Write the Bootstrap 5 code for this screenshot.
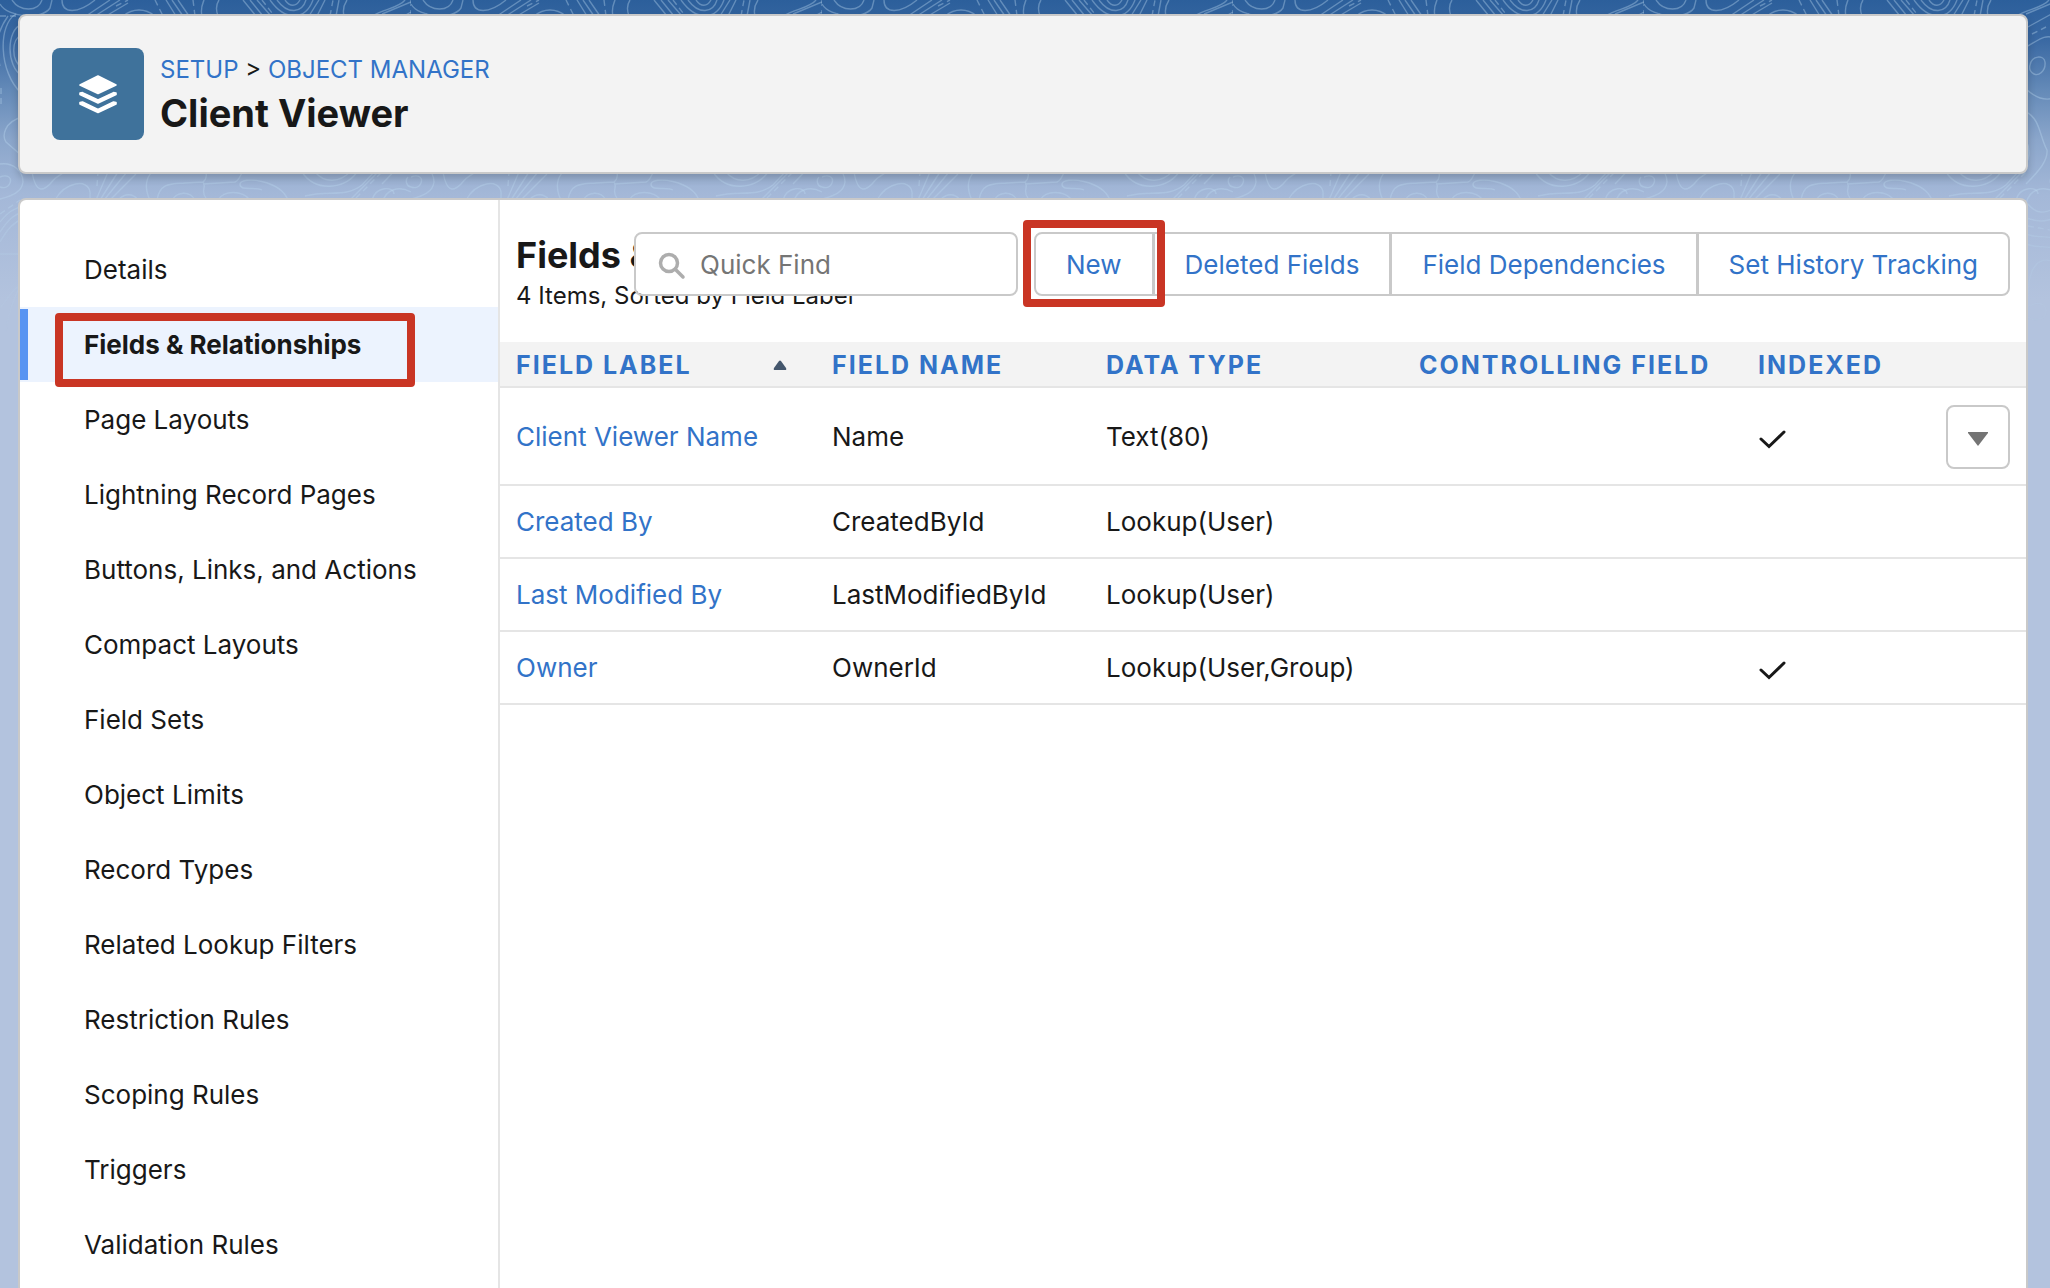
<!DOCTYPE html>
<html lang="en">
<head>
<meta charset="utf-8">
<meta name="viewport" content="width=device-width, initial-scale=1">
<title>Client Viewer | Object Manager</title>
<link rel="stylesheet" href="https://cdn.jsdelivr.net/npm/bootstrap@5.3.0/dist/css/bootstrap.min.css">
<style>
:root { --ink:#181818; --brand:#3273c8; --line:#c9c9c9; --rule:#e5e5e5; --band:#f3f3f3; --callout:#c93524; }
body { font-family: Inter, "Liberation Sans", sans-serif; font-size:26px; line-height:36px; color:var(--ink); background:#b3c3de; }
a { color:var(--brand); text-decoration:none; }
h1,h2 { font-weight:700; margin:0; white-space:nowrap; }
h1 { font-size:38px; line-height:50px; }
h2 { font-size:36px; line-height:46px; }

/* Page frame */
.setup-shell { position:relative; isolation:isolate; min-height:100vh; overflow:hidden; padding:14px 22px 0 18px; gap:24px;
  background:linear-gradient(180deg,#2c5f9b 0,#3a69a3 40px,#648ab8 90px,#8ba6cb 140px,#a4b8d8 195px,#b3c3de 300px); }
.topo { position:absolute; top:0; left:0; width:100%; height:340px; z-index:-1; }
.setup-head { background:var(--band); border:2px solid var(--line); border-radius:8px; padding:32px; height:160px; box-shadow:0 4px 8px rgba(0,0,0,.2); }
.tile { width:92px; height:92px; border-radius:8px; background:#3f729b; }
.crumbs { font-size:24px; line-height:36px; }
.setup-body { background:#fff; border:2px solid var(--line); border-bottom:0; border-radius:8px 8px 0 0; }

/* Side menu */
.side { width:480px; border-right:2px solid var(--rule); padding-top:32px; }
.side .nav-link { color:var(--ink); height:75px; padding:20px 16px 19px 64px; }
.side .nav-link.active { background:#ecf3fe; font-weight:700; position:relative; }
.side .nav-link.active::before { content:""; position:absolute; left:0; top:2px; bottom:2px; width:8px; background:#5894f2; }
.callout::after { content:""; position:absolute; border:8px solid var(--callout); border-radius:4px; pointer-events:none; z-index:6; }
.side .callout::after { left:35px; right:83px; top:6px; height:74px; }

/* List header and its tools */
.list-top { position:relative; height:142px; padding:32px 16px 0; }
.list-tools { position:absolute; right:16px; top:32px; gap:16px; z-index:2; }
.finder { position:relative; width:384px; }
.finder svg { position:absolute; left:24px; top:20px; }
.finder .form-control { height:64px; padding:0 16px 0 64px; border:2px solid var(--line); border-radius:8px; font-size:26px; color:var(--ink); }
.finder .form-control::placeholder { color:#757575; opacity:1; }
.tools { min-width:976px; }
.tools .btn { height:64px; border:2px solid var(--line); background:#fff; color:var(--brand); font-size:26px; line-height:36px; padding:1px 30px 0; border-radius:8px; white-space:nowrap; }
.tools .btn + .btn { margin-left:-2px; }
.tools .callout::after { left:-13px; right:-13px; top:-14px; bottom:-13px; }
.tools .callout { z-index:3; }

/* Fields table */
.fields { table-layout:fixed; margin:0; color:var(--ink); }
.fields > :not(caption) > * > * { padding:1px 16px 0; border-bottom:2px solid var(--rule); vertical-align:middle; height:73px; background:transparent; white-space:nowrap; color:var(--ink); }
.fields > thead > tr > th { height:45px; font-size:25px; line-height:28px; letter-spacing:2px; background:var(--band); color:var(--brand); }
.fields > tbody > tr:first-child > td { height:98px; }
.sort-mark { margin-right:12px; }
.more { width:64px; height:64px; border:2px solid var(--line); border-radius:8px; background:#fff; padding:0; }
</style>
</head>
<body>
<div class="setup-shell d-flex flex-column">
  <svg class="topo" aria-hidden="true">
    <defs>
      <linearGradient id="fade" x1="0" y1="0" x2="0" y2="1"><stop offset="0" stop-color="#fff"/><stop offset=".55" stop-color="#fff"/><stop offset="1" stop-color="#000"/></linearGradient>
      <mask id="fadeMask"><rect width="100%" height="340" fill="url(#fade)"/></mask>
      <pattern id="contours" width="411" height="340" patternUnits="userSpaceOnUse">
        <g fill="none" stroke="#bcd8f0" stroke-opacity=".38" stroke-width="1.4">
          <path d="M0 4C8 18 42 20 50 8L52 0M12 0C20 12 38 12 42 0M62 0C62 14 78 14 95 0M86 16L110 0M95 16L120 0M106 16L128 3M123 16C133 8 145 8 155 16M166 0L176 16M172 0L183 16M178 0L189 16M202 16C200 8 203 3 204 0M218 16C215 8 217 3 219 0M243 0L256 16M250 0L263 16M257 0L271 16M270 0C285 21 305 21 313 0M277 0C288 15 302 13 306 0M285 0C290 7 296 7 300 0M309 16L319 0M317 16L325 0M336 16L339 0M344 16C342 8 345 3 347 0M372 16C385 9 400 7 405 0"/>
          <path stroke-dasharray="6 4" d="M116 6L128 0M155 0L163 16M193 0L195 16M262 0L272 13M330 16L333 0M411 0L411 14M97 186L98 172M388 34L402 27M356 198L382 172M0 16H18M1 88V108M384 226L406 230M0 214L20 200"/>
          <path d="M0 177C8 174 12 178 10 183C8 188 3 188 0 187M408 177C405 180 406 186 411 187M0 164C14 162 23 172 23 182C22 192 12 196 0 199M32 172C36 195 44 190 50 184C56 176 60 175 65 172M55 200C65 182 88 178 90 192V200M96 200L108 172M100 200L118 172M104 200L127 172M110 200L136 174M118 200C125 193 133 193 138 200M150 200C144 188 146 178 152 172M157 200C160 182 172 184 185 183L203 182C208 178 206 174 206 172M203 182C207 186 200 192 206 198M203 184L235 182C240 180 240 174 243 172M172 200C178 191 190 191 195 200M218 200C224 190 242 190 250 200M262 190C255 186 240 192 240 184C242 176 280 180 288 200M302 172C315 192 345 190 357 172M315 172C325 184 340 182 350 172M305 196C330 190 345 198 362 185L374 172M350 200L378 172M372 200C376 186 394 186 394 194"/>
          <path d="M22 24C6 30 6 66 22 76M22 34C11 40 11 60 22 68M16 14C-2 24 -2 72 22 94M8 16C-6 36 -4 50 0 66M22 117C4 122 2 136 6 142L22 156M0 222C8 212 14 208 24 206M0 232C8 220 14 214 24 212M0 242C8 228 14 222 24 218M0 254H22M6 332C8 312 14 300 22 280M0 308C8 300 10 290 22 284"/>
          <path d="M382 14L411 2M382 28L411 12M382 47C395 40 400 34 411 38M386 65C388 55 400 55 401 62C402 72 394 76 390 74C386 72 385 69 386 65M382 89C392 98 400 101 411 98M382 112C396 118 396 138 403 150C404 160 396 170 382 184M382 140C387 150 385 162 380 166M382 204C385 188 400 186 411 192M384 204C392 214 400 214 411 208M382 218C395 222 400 222 411 218M382 234C392 238 402 236 411 238M382 244C392 248 402 246 411 248M384 298C384 264 396 256 411 262M382 307C396 300 402 304 402 312C402 320 390 322 382 316"/>
        </g>
      </pattern>
    </defs>
    <rect width="100%" height="340" fill="url(#contours)" mask="url(#fadeMask)"/>
  </svg>

  <header class="setup-head d-flex align-items-start">
    <span class="tile d-flex align-items-center justify-content-center flex-shrink-0">
      <svg width="40" height="40" viewBox="0 0 40 40" fill="#fff" stroke="#fff" stroke-width="1.6" stroke-linejoin="round" aria-hidden="true">
        <path d="M20 2L38 11L20 19.500L2 11Z"/>
        <path d="M2 19L4.500 18.600L20 26L35.500 18.600L38 19V20.500L20 29L2 20.500Z"/>
        <path d="M2 28.500L4.500 28L20 35.500L35.500 28L38 28.500V30L20 38.500L2 30Z"/>
      </svg>
    </span>
    <div class="ms-3 pt-1">
      <nav class="crumbs" aria-label="Breadcrumb"><a href="#">SETUP</a> &gt; <a href="#">OBJECT MANAGER</a></nav>
      <h1>Client Viewer</h1>
    </div>
  </header>

  <main class="setup-body d-flex flex-grow-1">
    <nav class="side nav flex-column flex-nowrap flex-shrink-0" aria-label="Object settings">
      <a class="nav-link" href="#">Details</a>
      <a class="nav-link active callout" href="#" aria-current="page">Fields &amp; Relationships</a>
      <a class="nav-link" href="#">Page Layouts</a>
      <a class="nav-link" href="#">Lightning Record Pages</a>
      <a class="nav-link" href="#">Buttons, Links, and Actions</a>
      <a class="nav-link" href="#">Compact Layouts</a>
      <a class="nav-link" href="#">Field Sets</a>
      <a class="nav-link" href="#">Object Limits</a>
      <a class="nav-link" href="#">Record Types</a>
      <a class="nav-link" href="#">Related Lookup Filters</a>
      <a class="nav-link" href="#">Restriction Rules</a>
      <a class="nav-link" href="#">Scoping Rules</a>
      <a class="nav-link" href="#">Triggers</a>
      <a class="nav-link" href="#">Validation Rules</a>
    </nav>

    <section class="flex-grow-1">
      <div class="list-top">
        <h2>Fields &amp; Relationships</h2>
        <div class="crumbs">4 Items, Sorted by Field Label</div>
        <div class="list-tools d-flex">
          <div class="finder">
            <input class="form-control" type="search" placeholder="Quick Find" aria-label="Quick Find">
            <svg width="28" height="28" viewBox="0 0 28 28" fill="none" stroke="#adadad" stroke-width="3.500" stroke-linecap="round" aria-hidden="true"><circle cx="11" cy="11" r="8.500"/><path d="M17.500 17.500L25 25"/></svg>
          </div>
          <div class="tools btn-group">
            <button class="btn callout" type="button">New</button>
            <button class="btn" type="button">Deleted Fields</button>
            <button class="btn" type="button">Field Dependencies</button>
            <button class="btn" type="button">Set History Tracking</button>
          </div>
        </div>
      </div>

      <table class="table fields">
        <colgroup><col style="width:316px"><col style="width:274px"><col style="width:313px"><col style="width:339px"><col><col style="width:96px"></colgroup>
        <thead>
          <tr>
            <th scope="col" aria-sort="ascending"><span class="d-flex align-items-center justify-content-between">FIELD LABEL
              <svg class="sort-mark" width="16" height="10" viewBox="0 0 16 10" fill="#44566c" aria-hidden="true"><path d="M7 1Q8 0 9 1L14 8Q15 10 13 10H3Q1 10 2 8Z"/></svg></span></th>
            <th scope="col">FIELD NAME</th>
            <th scope="col">DATA TYPE</th>
            <th scope="col">CONTROLLING FIELD</th>
            <th scope="col">INDEXED</th>
            <th scope="col" aria-label="Actions"></th>
          </tr>
        </thead>
        <tbody>
          <tr>
            <td><a href="#">Client Viewer Name</a></td><td>Name</td><td>Text(80)</td><td></td>
            <td><svg class="d-block mt-1" width="28" height="20" viewBox="0 0 28 20" fill="none" stroke="#181818" stroke-width="3" stroke-linecap="round" role="img" aria-label="Indexed"><path d="M3 10L11 17.500L26 3"/></svg></td>
            <td><button class="more d-flex align-items-center justify-content-center" type="button" aria-label="Show actions"><svg class="mt-1" width="20" height="14" viewBox="0 0 20 14" fill="#747474" aria-hidden="true"><path d="M0 0H20V1L10 14L0 1Z"/></svg></button></td>
          </tr>
          <tr><td><a href="#">Created By</a></td><td>CreatedById</td><td>Lookup(User)</td><td></td><td></td><td></td></tr>
          <tr><td><a href="#">Last Modified By</a></td><td>LastModifiedById</td><td>Lookup(User)</td><td></td><td></td><td></td></tr>
          <tr>
            <td><a href="#">Owner</a></td><td>OwnerId</td><td>Lookup(User,Group)</td><td></td>
            <td><svg class="d-block mt-1" width="28" height="20" viewBox="0 0 28 20" fill="none" stroke="#181818" stroke-width="3" stroke-linecap="round" role="img" aria-label="Indexed"><path d="M3 10L11 17.500L26 3"/></svg></td>
            <td></td>
          </tr>
        </tbody>
      </table>
    </section>
  </main>
</div>
<script src="https://cdn.jsdelivr.net/npm/bootstrap@5.3.0/dist/js/bootstrap.bundle.min.js"></script>
</body>
</html>
